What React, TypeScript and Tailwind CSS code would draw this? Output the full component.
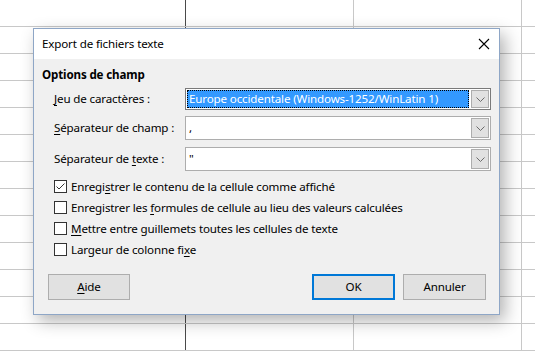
import React from 'react';

const ROWS = Array.from({ length: 13 });

const Chevron = () => (
  <svg width="9" height="5" viewBox="0 0 9 5" className="block">
    <path d="M0.5 0.5 L4.5 4.5 L8.5 0.5" fill="none" stroke="#6b6b6b" strokeWidth="1" />
  </svg>
);

const Combo = ({ value, focused = false, height }: { value: string; focused?: boolean; height: string }) => (
  <div
    className={`flex w-[306px] ${height} bg-white border ${focused ? 'border-[#7a7a7a]' : 'border-[#adadad]'}`}
  >
    {focused ? (
      <div className="flex-1 m-[1px] flex items-center bg-[#3399ff] border border-dotted border-black text-white pl-[1px] whitespace-nowrap overflow-hidden">
        {value}
      </div>
    ) : (
      <div className="flex-1 flex items-center pl-[3px] whitespace-nowrap">{value}</div>
    )}
    <div className="w-[18px] m-[1px] flex items-center justify-center bg-[#e1e1e1] border border-[#adadad]">
      <Chevron />
    </div>
  </div>
);

const Checkbox = ({ checked = false, children }: { checked?: boolean; children: React.ReactNode }) => (
  <div className="flex items-center h-[21px]">
    <div className="w-[13px] h-[13px] border border-[#333333] bg-white flex items-center justify-center">
      {checked && (
        <svg width="11" height="11" viewBox="0 0 11 11" className="block">
          <path d="M1.5 5.5 L4 8 L9.5 2.5" fill="none" stroke="#333333" strokeWidth="1" />
        </svg>
      )}
    </div>
    <span className="ml-[4px] whitespace-nowrap">{children}</span>
  </div>
);

const App: React.FC = () => {
  return (
    <div className="relative w-[535px] h-[352px] overflow-hidden bg-white font-['Noto_Sans',sans-serif] text-[11.6px] tracking-[-0.15px] leading-[16px] text-black">
      {/* spreadsheet grid behind the dialog */}
      <div className="flex flex-col">
        {ROWS.map((_, i) => (
          <div key={i} className="flex h-[27px] border-b border-[#c8c8c8]">
            <div className="w-[186px] border-r border-[#4a4a4a]" />
            <div className="w-[168px] border-r border-[#c8c8c8]" />
            <div className="w-[168px] border-r border-[#c8c8c8]" />
            <div className="flex-1" />
          </div>
        ))}
      </div>

      {/* dialog */}
      <div className="absolute left-[33px] top-[28px] w-[467px] h-[287px] flex flex-col border border-[#8ea6c6] bg-[#f0f0f0] shadow-[5px_6px_16px_rgba(0,0,0,0.3)]">
        <div className="h-[30px] bg-white flex items-center justify-between pl-[8px] pr-[9px]">
          <span>Export de fichiers texte</span>
          <svg width="12" height="12" viewBox="0 0 12 12" className="block">
            <path d="M1 1 L11 11 M11 1 L1 11" stroke="#000" strokeWidth="1.1" />
          </svg>
        </div>

        <div className="flex flex-col pl-[8px] pt-[8px]">
          <div className="font-bold">Options de champ</div>

          <div className="flex flex-col pl-[12px]">
            <div className="flex items-center mt-[5px]">
              <span className="w-[131px]">
                <u className="underline-offset-2">J</u>eu de caractères :
              </span>
              <Combo value="Europe occidentale (Windows-1252/WinLatin 1)" focused height="h-[22px]" />
            </div>
            <div className="flex items-center mt-[6px]">
              <span className="w-[131px]">
                <u className="underline-offset-2">S</u>éparateur de champ :
              </span>
              <Combo value="," height="h-[24px]" />
            </div>
            <div className="flex items-center mt-[7px]">
              <span className="w-[131px]">
                Séparateur de <u className="underline-offset-2">t</u>exte :
              </span>
              <Combo value={'"'} height="h-[24px]" />
            </div>

            <div className="flex flex-col mt-[5px]">
              <Checkbox checked>
                Enregi<u className="underline-offset-2">s</u>trer le contenu de la cellule comme affiché
              </Checkbox>
              <Checkbox>
                Enregistrer les <u className="underline-offset-2">f</u>ormules de cellule au lieu des valeurs calculées
              </Checkbox>
              <Checkbox>
                <u className="underline-offset-2">M</u>ettre entre guillemets toutes les cellules de texte
              </Checkbox>
              <Checkbox>
                Largeur de colonne fi<u className="underline-offset-2">x</u>e
              </Checkbox>
            </div>
          </div>

          <div className="flex mt-[14px] pl-[6px] pr-[13px]">
            <button className="w-[82px] h-[26px] bg-[#e1e1e1] border border-[#adadad]">
              <u className="underline-offset-2">A</u>ide
            </button>
            <div className="flex-1" />
            <button className="w-[83px] h-[26px] bg-[#e1e1e1] border-2 border-[#0078d7]">OK</button>
            <button className="w-[83px] h-[26px] ml-[8px] bg-[#e1e1e1] border border-[#adadad]">Annuler</button>
          </div>
        </div>
      </div>
    </div>
  );
};

export default App;
